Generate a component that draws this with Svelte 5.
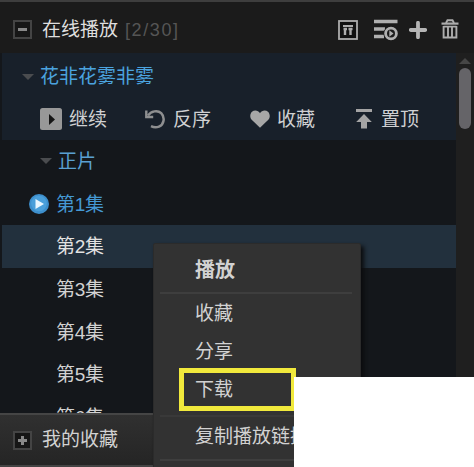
<script>
  const episodes = [1, 2, 3, 4, 5, 6];

  let playing = $state(1);
  let selected = $state(2);
</script>

<div class="player-list">
  <header class="header">
    <span class="toggle minus"></span>
    <h1>在线播放</h1>
    <span class="count">[2/30]</span>
    <div class="tools">
      <svg class="pin" width="20" height="20" viewBox="0 0 20 20">
        <rect x="1" y="1" width="18" height="18" fill="#111" stroke="#adadad" stroke-width="1.8" />
        <path d="M5 6H15" stroke="#adadad" stroke-width="2" />
        <path d="M7 8.5V15M12.5 8.5V15M5.5 9H9M10.5 9H14.5" fill="none" stroke="#adadad" stroke-width="2.4" />
      </svg>
      <svg class="order" width="26" height="22" viewBox="0 0 26 22">
        <path d="M1 2.5H24.5M1 10H12M1 17.5H11" fill="none" stroke="#b0b0b0" stroke-width="3.6" />
        <circle cx="18" cy="14.5" r="7.6" fill="#1b1b1b" />
        <circle cx="18" cy="14.5" r="5.4" fill="#1b1b1b" stroke="#b0b0b0" stroke-width="2.8" />
        <path d="M16.3 11.2V17.8L20.5 14.5Z" fill="#b0b0b0" />
      </svg>
      <svg class="add" width="18" height="18" viewBox="0 0 18 18">
        <path d="M9 1.8V16.2M1.8 9H16.2" stroke="#b5b5b5" stroke-width="3.8" stroke-linecap="round" />
      </svg>
      <svg class="trash" width="18" height="20" viewBox="0 0 18 20">
        <path d="M0.5 4.6H17.5" stroke="#adadad" stroke-width="2.2" />
        <path d="M5 4L6.5 1.3H11.5L13 4M2.6 7V18.5H15.4V7M2.6 7.6H15.4M7 7V18M11 7V18" fill="none" stroke="#adadad" stroke-width="1.9" />
      </svg>
    </div>
  </header>

  <div class="body">
    <div class="content">
      <section class="album">
        <div class="album-title">
          <i class="caret"></i>
          <span>花非花雾非雾</span>
        </div>
        <div class="actions">
          <button class="resume">
            <svg width="22" height="22" viewBox="0 0 22 22">
              <rect width="22" height="22" rx="2.5" fill="#989898" />
              <path d="M9 6V17L15 11.5Z" fill="#151515" />
            </svg>
            <span>继续</span>
          </button>
          <button class="reverse">
            <svg width="20" height="20" viewBox="0 0 20 20">
              <path d="M3 6.5C6 2.2 12.5 .6 16.2 4.2C20.3 8.4 19 15.5 14 17.6C11.5 18.6 8.5 18.4 6 17.2" fill="none" stroke="#8e8f90" stroke-width="2.5" />
              <path d="M1.3 1.5V8H8.2" fill="none" stroke="#8e8f90" stroke-width="2.4" />
            </svg>
            <span>反序</span>
          </button>
          <button class="collect">
            <svg width="20" height="18" viewBox="0 0 20 18">
              <path d="M10 17.8L1.7 9.8C-.5 7.5 0 3.5 2 1.7C4.5-.5 8.3.2 10 3.2C11.7.2 15.5-.5 18 1.7C20 3.5 20.5 7.5 18.3 9.8Z" fill="#a7a7a7" />
            </svg>
            <span>收藏</span>
          </button>
          <button class="top">
            <svg width="16" height="20" viewBox="0 0 16 20">
              <path d="M0 0H16V3H0ZM8 5L15.8 13H11V19.5H5V13H.2Z" fill="#a4a4a4" />
            </svg>
            <span>置顶</span>
          </button>
        </div>
      </section>

      <div class="row part">
        <i class="caret"></i>
        <span>正片</span>
      </div>
      {#each episodes as n}
        <div class="row episode" class:playing={n === playing} class:selected={n === selected}>
          <span class="state">
            {#if n === playing}
              <svg width="20" height="20" viewBox="0 0 20 20">
                <circle cx="10" cy="10" r="10" fill="#3d8fcd" />
                <circle cx="10" cy="9.5" r="7.8" fill="#4a9fda" />
                <path d="M6.5 5V15L15 10Z" fill="#e8f6ff" />
              </svg>
            {/if}
          </span>
          <span class="name">第{n}集</span>
        </div>
      {/each}
    </div>
    <div class="scrollbar">
      <i class="up"></i>
      <div class="thumb"></div>
    </div>
  </div>

  <footer class="footer">
    <span class="toggle plus"></span>
    <span>我的收藏</span>
  </footer>

  <!-- Context menu of the selected episode -->
  <div class="menu">
    <div class="item default">播放</div>
    <hr />
    <div class="item first">收藏</div>
    <div class="item">分享</div>
    <div class="item">下载</div>
    <hr class="wide" />
    <div class="item copy">复制播放链接</div>
    <hr />
  </div>
  <div class="highlight"></div>
  <div class="blank"></div>
</div>

<style>
  :global(body) {
    margin: 0;
    background: #fff;
  }

  .player-list {
    position: relative;
    display: flex;
    flex-direction: column;
    box-sizing: border-box;
    width: 474px;
    height: 467px;
    overflow: hidden;
    border-top: 2px solid #3e3e3e;
    background: #14171b;
    color: #d2d2d2;
    font: 19px/24px "Liberation Sans", "Noto Sans CJK SC", sans-serif;
    white-space: nowrap;
  }

  .header {
    display: flex;
    align-items: center;
    flex: none;
    height: 51px;
    padding: 4px 15px 0 13px;
    box-sizing: border-box;
    background: #1b1b1b;
  }

  h1 {
    margin: 0 7px 0 10px;
    font-size: 19px;
    font-weight: 400;
    color: #dedede;
  }

  .count {
    font-size: 18px;
    letter-spacing: 1.6px;
    color: #555;
  }

  .toggle {
    position: relative;
    flex: none;
    box-sizing: border-box;
    width: 19px;
    height: 19px;
    border: 2px solid #444;
    background: #161616;
  }

  .toggle::before,
  .plus::after {
    content: '';
    position: absolute;
    top: 6px;
    left: 3px;
    width: 9px;
    height: 3px;
    background: #888;
  }

  .plus::after {
    transform: rotate(90deg);
  }

  .tools {
    display: flex;
    align-items: center;
    margin-left: auto;
  }

  .order {
    margin-left: 15px;
  }

  .add {
    margin-left: 10px;
  }

  .trash {
    margin-left: 14px;
    margin-top: -2px;
  }

  .body {
    display: flex;
    flex: none;
    height: 360px;
    overflow: hidden;
  }

  .content {
    width: 456px;
  }

  .album {
    box-sizing: border-box;
    height: 87px;
    padding-top: 11px;
    margin-left: 2px;
    background: #18202a;
  }

  .album-title {
    display: flex;
    align-items: center;
    padding-left: 20px;
    color: #4ba3df;
  }

  .album-title span {
    margin-left: 6px;
    padding-top: 1px;
  }

  .caret {
    border: 6px solid transparent;
    border-top-color: #4a4c4f;
    border-bottom: 0;
  }

  .actions {
    display: flex;
    margin: 17px 0 0 38px;
  }

  button {
    display: flex;
    align-items: center;
    padding: 0;
    border: 0;
    background: none;
    color: #cfd0d2;
    font: inherit;
  }

  button span {
    padding-top: 2px;
  }

  .resume {
    gap: 7px;
    width: 105px;
  }

  .reverse {
    gap: 8px;
    width: 105px;
  }

  .collect {
    gap: 7px;
    width: 106px;
  }

  .top {
    gap: 9px;
  }

  .row {
    display: flex;
    align-items: center;
    height: 42.6px;
    margin-left: 2px;
  }

  .part {
    padding-left: 38px;
    color: #5aa0d2;
  }

  .part span {
    margin-left: 6px;
    padding-top: 2px;
  }

  .state {
    display: flex;
    width: 27px;
    padding-left: 27px;
  }

  .name {
    padding-top: 2px;
    letter-spacing: -0.3px;
  }

  .playing {
    color: #4599d4;
  }

  .selected {
    background: #22303d;
    color: #e2e2e2;
  }

  .scrollbar {
    display: flex;
    flex-direction: column;
    align-items: center;
    width: 18px;
    background: #1f1f1f;
  }

  .up {
    margin: 5px 0 4px;
    border: 6px solid transparent;
    border-top: 0;
    border-bottom-color: #464646;
  }

  .thumb {
    width: 12px;
    height: 61px;
    border-radius: 6px;
    background: #656468;
  }

  .footer {
    display: flex;
    align-items: center;
    flex: none;
    box-sizing: border-box;
    height: 54px;
    padding: 0 0 0 13px;
    border-top: 2px solid #454545;
    border-bottom: 2px solid #444;
    background: linear-gradient(#303030, #252525);
  }

  .footer span:last-child {
    margin-left: 10px;
  }

  .menu {
    position: absolute;
    top: 241px;
    left: 153px;
    box-sizing: border-box;
    width: 208px;
    height: 230px;
    padding: 7px 4px 0;
    border: 1px solid #2b2b2b;
    border-radius: 2px;
    background: #323232;
    box-shadow: 3px 3px 4px #0b0c0e;
  }

  .item {
    height: 38px;
    padding-left: 37px;
    line-height: 38px;
  }

  .default {
    font-size: 20px;
    font-weight: 700;
  }

  .first {
    margin-top: 1px;
  }

  .copy {
    height: 39px;
    line-height: 39px;
  }

  hr {
    height: 2px;
    margin: 3px 4px 0 2px;
    border: 0;
    background: #3e3e3e;
  }

  .wide {
    margin-top: 6px;
    background: #393939;
  }

  .highlight {
    position: absolute;
    top: 366px;
    left: 179px;
    box-sizing: border-box;
    width: 117px;
    height: 43px;
    border: 5px solid #f1e93c;
  }

  .blank {
    position: absolute;
    top: 375px;
    left: 294px;
    right: 0;
    bottom: 0;
    background: #fff;
  }
</style>
